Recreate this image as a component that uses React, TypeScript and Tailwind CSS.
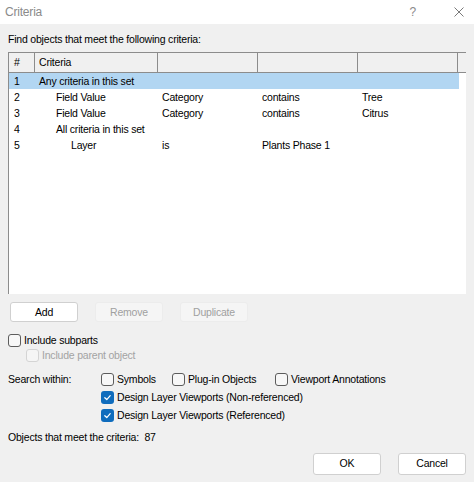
import React from "react";

type Row = { n: number; indent: number; cells: string[]; selected?: boolean };

const rows: Row[] = [
  { n: 1, indent: 0, cells: ["Any criteria in this set", "", "", ""], selected: true },
  { n: 2, indent: 1, cells: ["Field Value", "Category", "contains", "Tree"] },
  { n: 3, indent: 1, cells: ["Field Value", "Category", "contains", "Citrus"] },
  { n: 4, indent: 1, cells: ["All criteria in this set", "", "", ""] },
  { n: 5, indent: 2, cells: ["Layer", "is", "Plants Phase 1", ""] },
];

const indentClass = ["pl-[4px]", "pl-[21px]", "pl-[36px]"];

const Checkbox = ({ checked, disabled }: { checked?: boolean; disabled?: boolean }) => {
  if (checked) {
    return (
      <span className="flex h-[13px] w-[13px] shrink-0 items-center justify-center rounded-[3px] bg-[#0f6cbd]">
        <svg width="9" height="9" viewBox="0 0 10 10" fill="none">
          <path d="M2 5.2 L4.2 7.3 L8 3" stroke="white" strokeWidth="1.4" strokeLinecap="round" strokeLinejoin="round" />
        </svg>
      </span>
    );
  }
  return (
    <span
      className={
        disabled
          ? "h-[13px] w-[13px] shrink-0 rounded-[3px] border border-[#d4d4d4] bg-[#f5f5f5]"
          : "h-[13px] w-[13px] shrink-0 rounded-[3px] border border-[#5c5c5c] bg-[#f7f7f7]"
      }
    />
  );
};

const CheckItem = ({ label, checked, disabled }: { label: string; checked?: boolean; disabled?: boolean }) => (
  <div className="flex items-center gap-[3px]">
    <Checkbox checked={checked} disabled={disabled} />
    <span className={disabled ? "text-[#a3a3a3]" : "text-black"}>{label}</span>
  </div>
);

export default function App() {
  return (
    <div
      className="flex h-[482px] w-[474px] flex-col bg-[#f0f0f0] text-[10.5px] leading-none tracking-[-0.2px] text-black"
      style={{ fontFamily: '"Liberation Sans", Arial, sans-serif' }}
    >
      {/* title bar */}
      <div className="flex h-[24px] items-center bg-white pl-[5px]">
        <span className="text-[12px] text-[#8a8a8a]">Criteria</span>
        <span className="ml-auto mr-[38px] text-[12px] text-[#8a8a8a]">?</span>
        <svg className="mr-[10px]" width="10" height="10" viewBox="0 0 10 10">
          <path d="M0.5 0.5 L9.5 9.5 M9.5 0.5 L0.5 9.5" stroke="#7a7a7a" strokeWidth="1" />
        </svg>
      </div>

      <div className="flex flex-1 flex-col px-[8px]">
        <div className="mt-[10px] h-[12px]">Find objects that meet the following criteria:</div>

        {/* criteria list */}
        <div className="mt-[6px] flex h-[242px] w-[458px] flex-col border-l border-t border-[#8c8c8c] bg-white">
          <div className="flex h-[20px] shrink-0 bg-[#f0f0f0] border-b border-[#8c8c8c]">
            <div className="flex w-[26px] items-center border-r border-[#8c8c8c] pl-[5px]">#</div>
            <div className="flex w-[123px] items-center border-r border-[#8c8c8c] pl-[4px]">Criteria</div>
            <div className="w-[100px] border-r border-[#8c8c8c]" />
            <div className="w-[100px] border-r border-[#8c8c8c]" />
            <div className="w-[100px] border-r border-[#8c8c8c]" />
          </div>
          {rows.map((r) => (
            <div
              key={r.n}
              className={
                r.selected
                  ? "flex h-[16px] w-[450px] items-center bg-[#b2d6f2]"
                  : "flex h-[16px] w-[450px] items-center"
              }
            >
              <div className="w-[26px] pl-[5px]">{r.n}</div>
              <div className={"w-[123px] whitespace-nowrap " + indentClass[r.indent]}>{r.cells[0]}</div>
              <div className="w-[100px] pl-[4px]">{r.cells[1]}</div>
              <div className="w-[100px] pl-[4px]">{r.cells[2]}</div>
              <div className="w-[100px] pl-[4px]">{r.cells[3]}</div>
            </div>
          ))}
        </div>

        {/* list buttons */}
        <div className="mt-[8px] flex gap-[17px] pl-[2px]">
          <button className="flex h-[20px] w-[68px] items-center justify-center rounded-[3px] border border-[#d0d0d0] bg-white">
            Add
          </button>
          <button className="flex h-[20px] w-[68px] items-center justify-center rounded-[3px] border border-[#ececec] bg-[#f5f5f5] text-[#a0a0a0]">
            Remove
          </button>
          <button className="flex h-[20px] w-[68px] items-center justify-center rounded-[3px] border border-[#ececec] bg-[#f5f5f5] text-[#a0a0a0]">
            Duplicate
          </button>
        </div>

        <div className="mt-[12px]">
          <CheckItem label="Include subparts" />
        </div>
        <div className="mt-[2px] pl-[18px]">
          <CheckItem label="Include parent object" disabled />
        </div>

        {/* search within */}
        <div className="mt-[11px] flex">
          <div className="w-[93px] pt-[1px]">Search within:</div>
          <div className="flex flex-col gap-[5px]">
            <div className="flex">
              <div className="w-[71px]">
                <CheckItem label="Symbols" />
              </div>
              <div className="w-[103px]">
                <CheckItem label="Plug-in Objects" />
              </div>
              <CheckItem label="Viewport Annotations" />
            </div>
            <CheckItem label="Design Layer Viewports (Non-referenced)" checked />
            <CheckItem label="Design Layer Viewports (Referenced)" checked />
          </div>
        </div>

        <div className="mt-[10px]">Objects that meet the criteria:&nbsp;&nbsp;87</div>

        <div className="mt-[10px] flex justify-end gap-[17px]">
          <button className="flex h-[22px] w-[68px] items-center justify-center rounded-[3px] border border-[#d0d0d0] bg-white">
            OK
          </button>
          <button className="flex h-[22px] w-[68px] items-center justify-center rounded-[3px] border border-[#d0d0d0] bg-white">
            Cancel
          </button>
        </div>
      </div>
    </div>
  );
}
